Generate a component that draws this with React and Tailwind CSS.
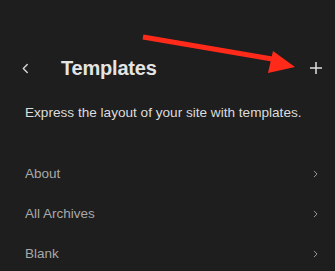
import React from "react";

const items = ["About", "All Archives", "Blank"];

function Chevron({ dir = "right", className }) {
  return (
    <svg viewBox="0 0 8 12" className={className} fill="none" stroke="currentColor" strokeWidth="1.6" strokeLinecap="round" strokeLinejoin="round">
      {dir === "right" ? <path d="M2 1.5 L6.5 6 L2 10.5" /> : <path d="M6 1.5 L1.5 6 L6 10.5" />}
    </svg>
  );
}

export default function App() {
  return (
    <div className="relative w-[335px] h-[271px] overflow-hidden bg-[#1e1e1e] font-['Liberation_Sans',Arial,sans-serif]">
      <div className="pt-[56px]">
        <div className="flex items-center h-[24px] pl-[22px] pr-[13px]">
          <Chevron dir="left" className="w-[7px] h-[11px] text-[#d8d8d8]" />
          <h1 className="ml-[32px] text-[20px] font-bold text-[#e4e4e4] tracking-[-0.2px]">Templates</h1>
          <svg viewBox="0 0 12 12" className="ml-auto w-[12px] h-[12px] text-[#e0e0e0]" stroke="currentColor" strokeWidth="1.5">
            <path d="M6 0 V12 M0 6 H12" />
          </svg>
        </div>
        <p className="mt-[24px] ml-[25px] text-[13.6px] text-[#dcdcdc] leading-[18px]">
          Express the layout of your site with templates.
        </p>
        <ul className="mt-[32px]">
          {items.map((item) => (
            <li key={item} className="flex items-center justify-between h-[40px] pl-[25px] pr-[17px]">
              <span className="text-[13.5px] text-[#a8a8a8]">{item}</span>
              <Chevron className="w-[5px] h-[8px] text-[#9a9a9a]" />
            </li>
          ))}
        </ul>
      </div>
      <svg className="absolute inset-0 pointer-events-none" width="335" height="271" viewBox="0 0 335 271">
        <path d="M143 37 L278 60" stroke="#ff2a1a" strokeWidth="5" strokeLinecap="butt" />
        <polygon points="295,67 273,51 268,73" fill="#ff2a1a" />
      </svg>
    </div>
  );
}
